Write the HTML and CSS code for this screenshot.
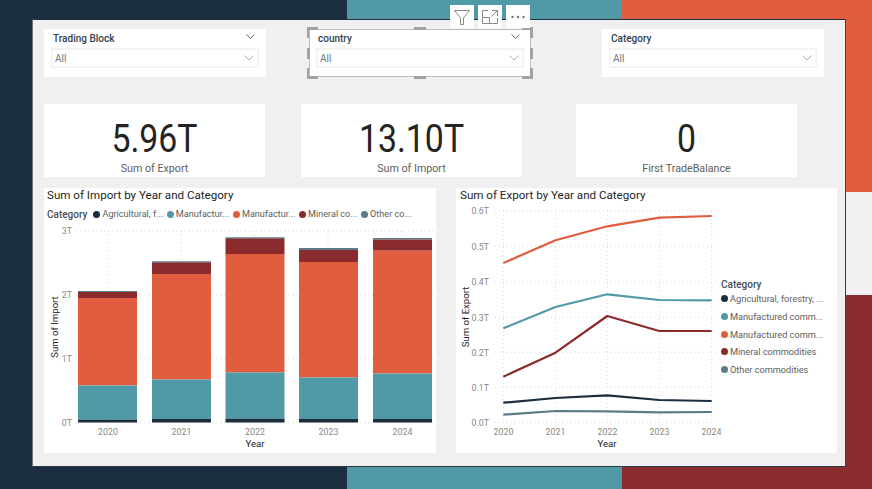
FILE: index.html
```html
<!DOCTYPE html>
<html lang="en">
<head>
<meta charset="utf-8">
<title>Trade dashboard</title>
<link rel="stylesheet" href="styles.css">
</head>
<body>
<main class="stage">
  <section class="canvas">
    <div class="row slicers">
      <div class="slicer">
        <div class="slicer-head"><span>Trading Block</span>
          <svg class="chev-small" viewBox="0 0 9 5"><path d="M.5.5 4.5 4.5 8.5.5"/></svg></div>
        <div class="dropdown"><span>All</span>
          <svg class="chev" viewBox="0 0 10 6"><path d="M.5.5 5 5 9.5.5"/></svg></div>
      </div>
      <div class="slicer selected">
        <div class="slicer-head"><span>country</span>
          <svg class="chev-small" viewBox="0 0 9 5"><path d="M.5.5 4.5 4.5 8.5.5"/></svg></div>
        <div class="dropdown"><span>All</span>
          <svg class="chev" viewBox="0 0 10 6"><path d="M.5.5 5 5 9.5.5"/></svg></div>
        <svg class="handles" viewBox="0 0 226 52">
          <path d="M.5 11V1.5H11M215 1.5h9.5V11M.5 41v9.5H11M215 50.500h9.500V41"/>
          <path d="M107 1.500h12M107 50.500h12M1.500 21v11M224.500 21v11"/>
        </svg>
        <div class="toolbar">
          <button class="tool" aria-label="Filter"><svg viewBox="0 0 18 18"><path d="M1.500 2.500h15L10.500 10v6.500h-3V10z"/></svg></button>
          <button class="tool" aria-label="Focus mode"><svg viewBox="0 0 18 18"><path d="M7 2.500H1.500v13h15V10M1.500 9.500H8.500V15.500M11 2.500h5.500V8M16.500 2.500 10.500 8.500"/></svg></button>
          <button class="tool" aria-label="More options"><svg viewBox="0 0 18 18"><circle class="dot" cx="3.500" cy="9" r="1.200"/><circle class="dot" cx="9" cy="9" r="1.200"/><circle class="dot" cx="14.500" cy="9" r="1.200"/></svg></button>
        </div>
      </div>
      <div class="slicer last">
        <div class="slicer-head"><span>Category</span></div>
        <div class="dropdown"><span>All</span>
          <svg class="chev" viewBox="0 0 10 6"><path d="M.5.5 5 5 9.5.5"/></svg></div>
      </div>
    </div>

    <div class="row kpis">
      <div class="kpi"><div class="kpi-value">5.96T</div><div class="kpi-label">Sum of Export</div></div>
      <div class="kpi"><div class="kpi-value">13.10T</div><div class="kpi-label">Sum of Import</div></div>
      <div class="kpi"><div class="kpi-value">0</div><div class="kpi-label">First TradeBalance</div></div>
    </div>

    <div class="row charts">
      <article class="chart chart-import">
        <h2 class="chart-title">Sum of Import by Year and Category</h2>
        <div class="legend-row">
          <strong class="legend-name">Category</strong>
          <span class="legend-item"><i class="swatch navy"></i>Agricultural, f...</span>
          <span class="legend-item"><i class="swatch teal"></i>Manufactur...</span>
          <span class="legend-item"><i class="swatch orange"></i>Manufactur...</span>
          <span class="legend-item"><i class="swatch red"></i>Mineral co...</span>
          <span class="legend-item"><i class="swatch slate"></i>Other co...</span>
        </div>
        <svg class="plot" width="392" height="231" viewBox="44 222 392 231">
          <g class="grid">
            <path d="M108 231V423M181 231V423M255 231V423M328 231V423M402 231V423"/>
            <path d="M76 231H436M76 295H436M76 358.700H436M76 422.500H436"/>
          </g>
          <g class="tick">
            <text x="72" y="234" text-anchor="end">3T</text>
            <text x="72" y="298" text-anchor="end">2T</text>
            <text x="72" y="362" text-anchor="end">1T</text>
            <text x="72" y="426" text-anchor="end">0T</text>
            <text x="108" y="435" text-anchor="middle">2020</text>
            <text x="181.500" y="435" text-anchor="middle">2021</text>
            <text x="255" y="435" text-anchor="middle">2022</text>
            <text x="328.500" y="435" text-anchor="middle">2023</text>
            <text x="402.500" y="435" text-anchor="middle">2024</text>
          </g>
          <text class="axis-title" x="255" y="447" text-anchor="middle">Year</text>
          <text class="axis-title" transform="translate(57.500 327) rotate(-90)" text-anchor="middle">Sum of Import</text>

          <g class="bars">
            <rect class="f-slate" x="78" y="291" width="59" height="1.500"/>
            <rect class="f-red" x="78" y="292" width="59" height="6"/>
            <rect class="f-orange" x="78" y="298" width="59" height="87.500"/>
            <rect class="f-teal" x="78" y="385.500" width="59" height="34.200"/>
            <rect class="f-navy" x="78" y="419.700" width="59" height="2.800"/>

            <rect class="f-slate" x="152" y="261.300" width="59" height="1.500"/>
            <rect class="f-red" x="152" y="262.500" width="59" height="11.500"/>
            <rect class="f-orange" x="152" y="274" width="59" height="105.500"/>
            <rect class="f-teal" x="152" y="379.500" width="59" height="39.500"/>
            <rect class="f-navy" x="152" y="419" width="59" height="3.500"/>

            <rect class="f-slate" x="225.500" y="237.300" width="59" height="1.500"/>
            <rect class="f-red" x="225.500" y="238.500" width="59" height="15.500"/>
            <rect class="f-orange" x="225.500" y="254" width="59" height="118.500"/>
            <rect class="f-teal" x="225.500" y="372.500" width="59" height="46.200"/>
            <rect class="f-navy" x="225.500" y="418.700" width="59" height="3.800"/>

            <rect class="f-slate" x="299" y="248" width="59" height="2"/>
            <rect class="f-red" x="299" y="250" width="59" height="12"/>
            <rect class="f-orange" x="299" y="262" width="59" height="115.500"/>
            <rect class="f-teal" x="299" y="377.500" width="59" height="41.500"/>
            <rect class="f-navy" x="299" y="419" width="59" height="3.500"/>

            <rect class="f-slate" x="373" y="238" width="59" height="1.500"/>
            <rect class="f-red" x="373" y="239.500" width="59" height="11.200"/>
            <rect class="f-orange" x="373" y="250.700" width="59" height="122.800"/>
            <rect class="f-teal" x="373" y="373.500" width="59" height="45.500"/>
            <rect class="f-navy" x="373" y="419" width="59" height="3.500"/>
          </g>
        </svg>
      </article>

      <article class="chart chart-export">
        <h2 class="chart-title">Sum of Export by Year and Category</h2>
        <div class="chart-body">
          <svg class="plot" width="262" height="247" viewBox="456 206 262 247">
            <g class="grid">
              <path d="M503.300 211V423M555.500 211V423M607.300 211V423M659.300 211V423M711.700 211V423"/>
              <path d="M495 211H716M495 246.300H716M495 281.700H716M495 317.300H716M495 352.300H716M495 387.300H716M495 422.700H716"/>
            </g>
            <g class="tick">
              <text x="489" y="214" text-anchor="end">0.6T</text>
              <text x="489" y="250" text-anchor="end">0.5T</text>
              <text x="489" y="285" text-anchor="end">0.4T</text>
              <text x="489" y="321" text-anchor="end">0.3T</text>
              <text x="489" y="356" text-anchor="end">0.2T</text>
              <text x="489" y="391" text-anchor="end">0.1T</text>
              <text x="489" y="426" text-anchor="end">0.0T</text>
              <text x="503.500" y="435" text-anchor="middle">2020</text>
              <text x="555.500" y="435" text-anchor="middle">2021</text>
              <text x="607.500" y="435" text-anchor="middle">2022</text>
              <text x="659.500" y="435" text-anchor="middle">2023</text>
              <text x="711.500" y="435" text-anchor="middle">2024</text>
            </g>
            <text class="axis-title" x="607" y="447" text-anchor="middle">Year</text>
            <text class="axis-title" transform="translate(469 317) rotate(-90)" text-anchor="middle">Sum of Export</text>
            <g class="lines">
              <polyline class="s-orange" points="503.300,263 555.500,240.300 607.300,226.300 659.300,217.700 711.700,216"/>
              <polyline class="s-teal" points="503.300,328.300 555.500,307 607.300,294.300 659.300,300 711.700,300.300"/>
              <polyline class="s-red" points="503.300,376.700 555.500,352.700 607.300,316 659.300,331 711.700,331"/>
              <polyline class="s-navy" points="503.300,402.700 555.500,398 607.300,395.300 659.300,400 711.700,401"/>
              <polyline class="s-slate" points="503.300,414.700 555.500,411 607.300,411.300 659.300,412.300 711.700,412"/>
            </g>
          </svg>
          <div class="legend-col">
            <strong class="legend-name">Category</strong>
            <span class="legend-item"><i class="swatch navy"></i>Agricultural, forestry, ...</span>
            <span class="legend-item"><i class="swatch teal"></i>Manufactured comm...</span>
            <span class="legend-item"><i class="swatch orange"></i>Manufactured comm...</span>
            <span class="legend-item"><i class="swatch red"></i>Mineral commodities</span>
            <span class="legend-item"><i class="swatch slate"></i>Other commodities</span>
          </div>
        </div>
      </article>
    </div>
  </section>
</main>
</body>
</html>
```
FILE: styles.css
```css
* { box-sizing: border-box; }
html, body { margin: 0; height: 100%; }
body { overflow: hidden; font-family: Roboto, "Liberation Sans", sans-serif; }

.stage {
  width: 872px;
  height: 489px;
  padding: 19px 26px 21px 32px;
  background-color: #1b2e40;
  background-image:
    linear-gradient(#e05d3f, #e05d3f),
    linear-gradient(#f0f0f2, #f0f0f2),
    linear-gradient(#8b2b2d, #8b2b2d),
    linear-gradient(#4f9aa6, #4f9aa6);
  background-repeat: no-repeat;
  background-size: 250px 192px, 250px 103px, 250px 194px, 275px 100%;
  background-position: 622px 0, 622px 192px, 622px 295px, 347px 0;
}

.canvas {
  width: 814px;
  height: 448px;
  padding: 9px 0 0 11px;
  background: #f0f0f0;
  border-left: 1px solid #6e7780;
  border-top: 1px solid #20303e;
  border-right: 1px solid #4a3a38;
  border-bottom: 1px solid #2b3a46;
}

.row { display: flex; }

/* Slicers */
.slicers { height: 48px; }
.slicer {
  position: relative;
  width: 222px;
  height: 48px;
  padding: 2px 7px 0;
  background: #fff;
  margin-right: 43px;
}
.slicer.selected { margin-right: 71px; box-shadow: 0 0 0 1px #bdbdbd inset; }
.slicer.last { margin-right: 0; }
.slicer-head {
  display: flex;
  align-items: center;
  justify-content: space-between;
  height: 15px;
  margin-bottom: 2px;
  padding: 0 4px 0 2px;
  font-size: 10px;
  font-weight: 500;
  color: #33414e;
}
.chev-small { width: 9px; height: 5px; margin-bottom: 4px; }
.chev-small path, .chev path { fill: none; stroke-width: 1; }
.chev-small path { stroke: #5a6c7c; }
.chev path { stroke: #9fb4c8; }
.dropdown {
  display: flex;
  align-items: center;
  justify-content: space-between;
  height: 20px;
  padding: 0 4px 0 3px;
  border: 1px solid #f2f2f2;
  box-shadow: 0 0 0 1px #f6f6f6 inset;
  font-size: 10px;
  color: #6b7785;
}
.chev { width: 10px; height: 6px; }

.handles {
  position: absolute;
  left: -2px;
  top: -2px;
  width: 226px;
  height: 52px;
  pointer-events: none;
}
.handles path { fill: none; stroke: #a3a3a3; stroke-width: 3; }

.toolbar {
  position: absolute;
  left: 141px;
  top: -24px;
  display: flex;
  gap: 4px;
}
.tool {
  display: flex;
  align-items: center;
  justify-content: center;
  width: 24px;
  height: 23px;
  padding: 0;
  border: 0;
  background: #fff;
}
.tool svg { width: 18px; height: 18px; }
.tool path { fill: none; stroke: #8a8a8a; stroke-width: 1; }
.tool .dot { fill: #777; }

/* KPI cards */
.kpis { margin-top: 27px; height: 73px; }
.kpi {
  width: 221px;
  height: 73px;
  margin-right: 36px;
  padding-top: 15px;
  background: #fff;
  text-align: center;
}
.kpi:nth-child(2) { margin-right: 54px; }
.kpi-value {
  height: 40px;
  font-size: 38px;
  line-height: 40px;
  color: #252423;
  transform: scaleX(.89);
}
.kpi-label {
  margin-top: 2px;
  font-size: 10.700px;
  line-height: 16px;
  color: #605e5c;
}

/* Charts */
.charts { margin-top: 11px; }
.chart { height: 265px; background: #fff; }
.chart-import { width: 392px; margin-right: 20px; }
.chart-export { width: 381px; }
.chart-title {
  height: 18px;
  margin: 0;
  padding: 0 0 0 3px;
  font-size: 11.600px;
  font-weight: 400;
  line-height: 15px;
  color: #252423;
}
.chart-export .chart-title { padding-left: 4px; }
.legend-row {
  display: flex;
  align-items: center;
  height: 16px;
  padding-left: 3px;
  font-size: 9.100px;
  color: #605e5c;
}
.legend-name { font-size: 10px; font-weight: 500; color: #484f58; }
.legend-row .legend-name { margin-right: 6px; }
.legend-row .legend-item { margin-right: 3.600px; }
.legend-item { display: flex; align-items: center; white-space: nowrap; }
.swatch { width: 7px; height: 7px; margin-right: 2px; border-radius: 50%; }
.navy { background: #1b2e40; }
.teal { background: #4f9aa6; }
.orange { background: #e05d3f; }
.red { background: #8b2b2d; }
.slate { background: #5b7b88; }

.chart-body { display: flex; }
.legend-col {
  display: flex;
  flex-direction: column;
  margin: 74px 0 0 3px;
  font-size: 9.200px;
  color: #605e5c;
}
.legend-col .legend-name { height: 10px; line-height: 10px; }
.legend-col .legend-item { height: 17.700px; }

.plot { display: block; overflow: visible; }
.grid path { fill: none; stroke: #d9d9d9; stroke-width: 1; stroke-dasharray: 1 3; }
.tick text { font-size: 8.800px; fill: #8a8886; }
.axis-title { font-size: 9.600px; fill: #252423; }
.f-navy { fill: #1b2e40; }
.f-teal { fill: #4f9aa6; }
.f-orange { fill: #e05d3f; }
.f-red { fill: #8b2b2d; }
.f-slate { fill: #5b7b88; }
.lines polyline { fill: none; stroke-width: 2.200; stroke-linejoin: round; }
.s-navy { stroke: #1b2e40; }
.s-teal { stroke: #4f9aa6; }
.s-orange { stroke: #e05d3f; }
.s-red { stroke: #8b2b2d; }
.s-slate { stroke: #5b7b88; }
```
